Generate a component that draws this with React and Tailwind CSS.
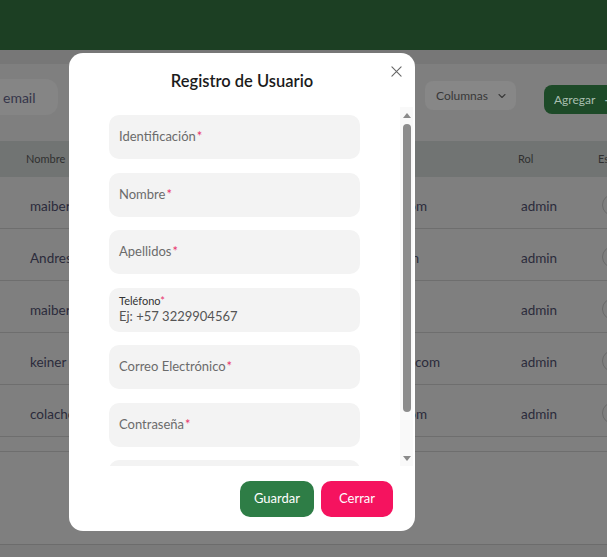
import React from 'react';

const rows = [
  { name: 'maiber', email: 'maiber@gmail.com', pad: 'pr-[13px]' },
  { name: 'Andres', email: 'andres@gmail.com', pad: 'pr-[21px]' },
  { name: 'maiber', email: 'maiber2@gmail.com', pad: 'pr-[40px]' },
  { name: 'keiner', email: 'keiner@hotmail.com', pad: 'pr-0' },
  { name: 'colacho', email: 'colacho@gmail.com', pad: 'pr-[13px]' },
];

const fields = [
  { label: 'Identificación' },
  { label: 'Nombre' },
  { label: 'Apellidos' },
  { label: 'Teléfono', phone: true },
  { label: 'Correo Electrónico' },
  { label: 'Contraseña' },
  { label: 'Confirmar Contraseña' },
];

function Background() {
  return (
    <div className="w-[607px] h-[557px] overflow-hidden bg-[#7f7f7f] text-[#2b2b3b]">
      <div className="h-[50px] bg-[#1c3f23]" />
      <div className="h-[14px] bg-[#777777]" />

      {/* toolbar */}
      <div className="h-[77px] relative">
        <div className="absolute left-0 top-[15px] w-[58px] h-[36px] rounded-r-[12px] bg-[#858585] flex items-center pl-[3px] text-[14px] text-[#35354a]">
          email
        </div>
        <div className="absolute left-[425px] top-[17px] w-[91px] h-[29px] rounded-[8px] bg-[#878787] flex items-center pl-[11px] gap-[8px] text-[12px] text-[#383838]">
          Columnas
          <svg className="w-[12px] h-[12px]" viewBox="0 0 24 24" fill="none" stroke="#3a3a3a" strokeWidth="2.2" strokeLinecap="round" strokeLinejoin="round">
            <path d="M6 9l6 6 6-6" />
          </svg>
        </div>
        <div className="absolute left-[544px] top-[21px] w-[80px] h-[29px] rounded-[8px] bg-[#1d4a28] flex items-center pl-[10px] gap-[9px] text-[12px] text-[#a9bfb0]">
          Agregar <span className="text-[15px]">+</span>
        </div>
      </div>

      {/* table header */}
      <div className="h-[36px] bg-[#717473] flex items-center text-[11px] text-[#303030]">
        <span className="w-[518px] pl-[26px] shrink-0">Nombre</span>
        <span className="w-[80px] shrink-0">Rol</span>
        <span className="shrink-0">Es</span>
      </div>

      {rows.map((r, i) => (
        <div key={i} className="h-[52px] pt-[8px] border-b border-[#6e6e6e] flex items-center text-[13.5px]">
          <span className="w-[250px] pl-[30px] shrink-0">{r.name}</span>
          <span className={`w-[190px] shrink-0 flex justify-end ${r.pad}`}>{r.email}</span>
          <span className="ml-[81px] w-[60px] shrink-0">admin</span>
          <span className="ml-[21px] w-[22px] h-[22px] rounded-full border border-[#6a6a6a] shrink-0 -mt-[4px]" />
        </div>
      ))}
      <div className="h-[15px] border-b border-[#6e6e6e]" />
      <div className="h-[93px] border-b border-[#6c6c6c]" />
      <div className="h-[12px] bg-[#7a7a7a]" />
    </div>
  );
}

function Field({ label, phone }) {
  if (phone) {
    return (
      <div className="h-[44px] shrink-0 rounded-[10px] bg-[#f3f3f3] px-[10px] pt-[6px] flex flex-col">
        <span className="text-[11px] leading-[13px] text-[#333]">
          {label}<span className="text-[#e8336d]">*</span>
        </span>
        <span className="text-[13px] leading-[18px] text-[#555]">Ej: +57 3229904567</span>
      </div>
    );
  }
  return (
    <div className="h-[44px] shrink-0 rounded-[10px] bg-[#f3f3f3] px-[10px] flex items-center text-[13px] text-[#6b6b6b]">
      {label}<span className="text-[#e8336d] ml-[1px]">*</span>
    </div>
  );
}

function Scrollbar() {
  return (
    <div className="w-[13px] h-full bg-[#f9f9f9] flex flex-col items-center">
      <svg className="w-[10px] h-[8px] mt-[4px]" viewBox="0 0 10 8">
        <path d="M1 7 L5 2 L9 7 Z" fill="#8a8a8a" />
      </svg>
      <div className="w-[8px] h-[288px] mt-[5px] rounded-full bg-[#8c8c8c]" />
      <div className="flex-1" />
      <svg className="w-[10px] h-[8px] mb-[3px]" viewBox="0 0 10 8">
        <path d="M1 1 L5 6 L9 1 Z" fill="#8a8a8a" />
      </svg>
    </div>
  );
}

function Modal() {
  return (
    <div className="absolute left-[69px] top-[53px] w-[346px] h-[478px] rounded-[14px] bg-white flex flex-col">
      <div className="relative pt-4 text-center text-[16.5px] leading-[24px] font-semibold text-[#1b1b1b]">
        Registro de Usuario
        <svg className="absolute right-[13px] top-[13px] w-[11px] h-[11px]" viewBox="0 0 12 12" fill="none" stroke="#666" strokeWidth="1.2" strokeLinecap="round">
          <path d="M1 1 L11 11 M11 1 L1 11" />
        </svg>
      </div>

      <div className="mt-[14px] h-[359px] flex justify-between pr-[2px] overflow-hidden">
        <div className="pl-10 pt-2 flex flex-col gap-[13.5px] w-[291px]">
          {fields.map((f, i) => (
            <Field key={i} {...f} />
          ))}
        </div>
        <Scrollbar />
      </div>

      <div className="flex justify-end gap-[7px] pr-[22px] pt-[15px]">
        <button className="w-[74px] h-[36px] rounded-[10px] bg-[#2e7d46] text-white text-[13px]">Guardar</button>
        <button className="w-[72px] h-[36px] rounded-[10px] bg-[#f5135f] text-white text-[13px]">Cerrar</button>
      </div>
    </div>
  );
}

export default function App() {
  return (
    <div className="relative w-[607px] h-[557px] overflow-hidden" style={{ fontFamily: 'Lato, "Noto Sans", sans-serif' }}>
      <Background />
      <Modal />
    </div>
  );
}
